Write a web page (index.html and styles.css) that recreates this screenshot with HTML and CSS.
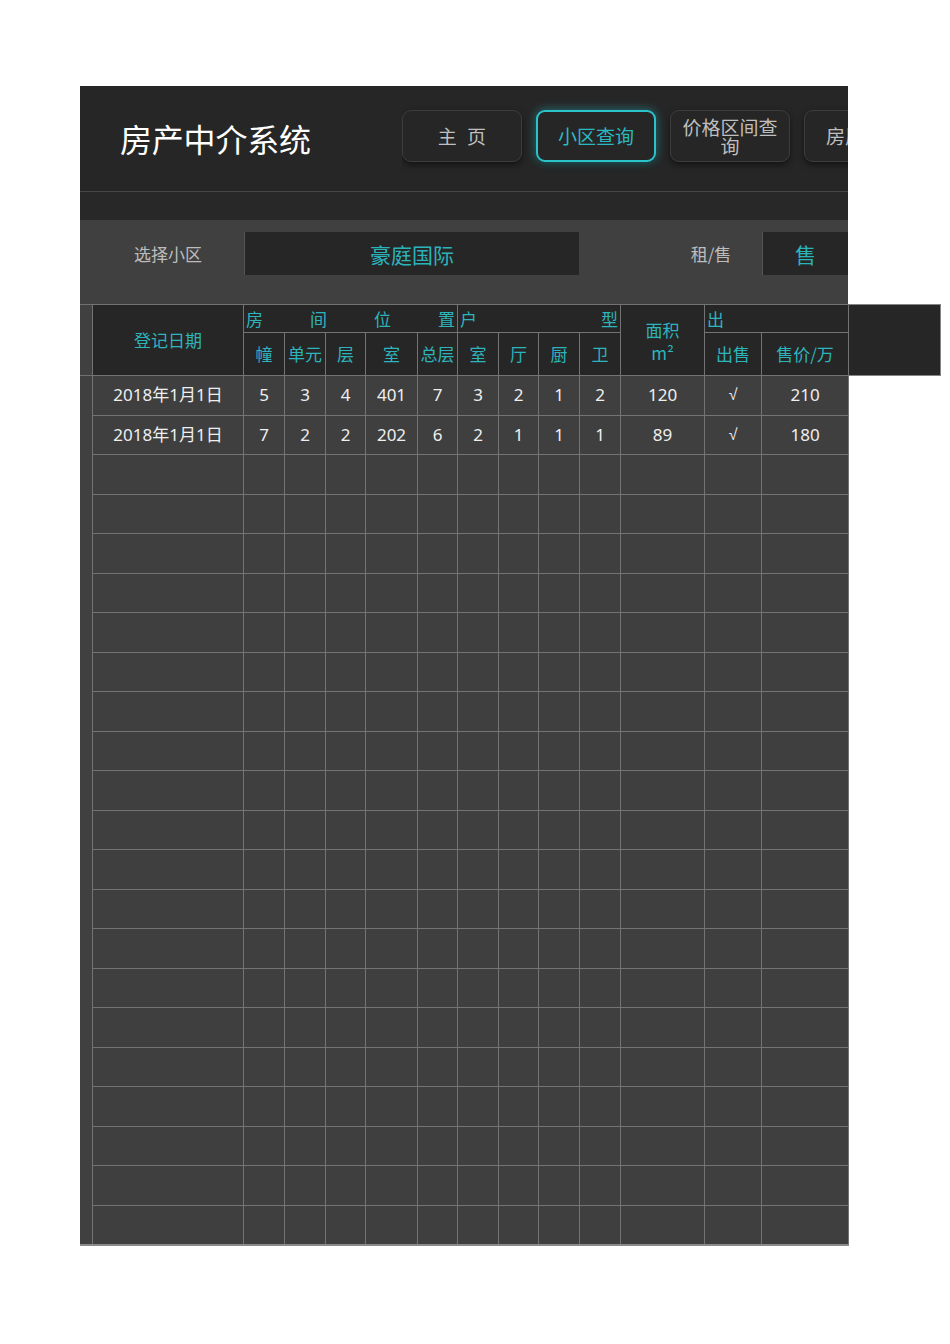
FILE: index.html
```html
<!DOCTYPE html>
<html lang="zh-CN">
<head>
<meta charset="utf-8">
<title>房产中介系统</title>
<link rel="stylesheet" href="styles.css">
</head>
<body>
<div class="page">
  <header class="topbar">
    <div class="title">房产中介系统</div>
    <nav class="nav">
      <div class="btn btn-home">主 页</div>
      <div class="btn active">小区查询</div>
      <div class="btn">价格区间查询</div>
      <div class="btn">房屋出租</div>
    </nav>
  </header>
  <div class="band"></div>
  <div class="filter">
    <div class="strip-cell"></div>
    <div class="label">选择小区</div>
    <div class="select">豪庭国际</div>
    <div class="spacer"></div>
    <div class="label">租/售</div>
    <div class="select">售</div>
  </div>
  <div class="grid-wrap">
    <div class="strip">
      <div class="strip-head"></div>
      <div class="strip-body"></div>
    </div>
    <table class="grid">
      <colgroup>
        <col style="width:151px"><col style="width:41px"><col style="width:41px"><col style="width:40px"><col style="width:52px"><col style="width:40px"><col style="width:41px"><col style="width:40px"><col style="width:41px"><col style="width:41px"><col style="width:84px"><col style="width:57px"><col style="width:87px">
      </colgroup>
      <thead>
        <tr class="h1">
          <th rowspan="2">登记日期</th>
          <th colspan="5"><div class="spread"><span>房</span><span>间</span><span>位</span><span>置</span></div></th>
          <th colspan="4"><div class="spread"><span>户</span><span>型</span></div></th>
          <th rowspan="2" class="area">面积<br>m²</th>
          <th colspan="2" class="left">出</th>
        </tr>
        <tr class="h2">
          <th>幢</th><th>单元</th><th>层</th><th>室</th><th>总层</th>
          <th>室</th><th>厅</th><th>厨</th><th>卫</th>
          <th>出售</th><th>售价/万</th>
        </tr>
      </thead>
      <tbody>
        <tr><td>2018年1月1日</td><td>5</td><td>3</td><td>4</td><td>401</td><td>7</td><td>3</td><td>2</td><td>1</td><td>2</td><td>120</td><td class="check">√</td><td>210</td></tr>
        <tr><td>2018年1月1日</td><td>7</td><td>2</td><td>2</td><td>202</td><td>6</td><td>2</td><td>1</td><td>1</td><td>1</td><td>89</td><td class="check">√</td><td>180</td></tr>
        <tr><td></td><td></td><td></td><td></td><td></td><td></td><td></td><td></td><td></td><td></td><td></td><td></td><td></td></tr>
        <tr><td></td><td></td><td></td><td></td><td></td><td></td><td></td><td></td><td></td><td></td><td></td><td></td><td></td></tr>
        <tr><td></td><td></td><td></td><td></td><td></td><td></td><td></td><td></td><td></td><td></td><td></td><td></td><td></td></tr>
        <tr><td></td><td></td><td></td><td></td><td></td><td></td><td></td><td></td><td></td><td></td><td></td><td></td><td></td></tr>
        <tr><td></td><td></td><td></td><td></td><td></td><td></td><td></td><td></td><td></td><td></td><td></td><td></td><td></td></tr>
        <tr><td></td><td></td><td></td><td></td><td></td><td></td><td></td><td></td><td></td><td></td><td></td><td></td><td></td></tr>
        <tr><td></td><td></td><td></td><td></td><td></td><td></td><td></td><td></td><td></td><td></td><td></td><td></td><td></td></tr>
        <tr><td></td><td></td><td></td><td></td><td></td><td></td><td></td><td></td><td></td><td></td><td></td><td></td><td></td></tr>
        <tr><td></td><td></td><td></td><td></td><td></td><td></td><td></td><td></td><td></td><td></td><td></td><td></td><td></td></tr>
        <tr><td></td><td></td><td></td><td></td><td></td><td></td><td></td><td></td><td></td><td></td><td></td><td></td><td></td></tr>
        <tr><td></td><td></td><td></td><td></td><td></td><td></td><td></td><td></td><td></td><td></td><td></td><td></td><td></td></tr>
        <tr><td></td><td></td><td></td><td></td><td></td><td></td><td></td><td></td><td></td><td></td><td></td><td></td><td></td></tr>
        <tr><td></td><td></td><td></td><td></td><td></td><td></td><td></td><td></td><td></td><td></td><td></td><td></td><td></td></tr>
        <tr><td></td><td></td><td></td><td></td><td></td><td></td><td></td><td></td><td></td><td></td><td></td><td></td><td></td></tr>
        <tr><td></td><td></td><td></td><td></td><td></td><td></td><td></td><td></td><td></td><td></td><td></td><td></td><td></td></tr>
        <tr><td></td><td></td><td></td><td></td><td></td><td></td><td></td><td></td><td></td><td></td><td></td><td></td><td></td></tr>
        <tr><td></td><td></td><td></td><td></td><td></td><td></td><td></td><td></td><td></td><td></td><td></td><td></td><td></td></tr>
        <tr><td></td><td></td><td></td><td></td><td></td><td></td><td></td><td></td><td></td><td></td><td></td><td></td><td></td></tr>
        <tr><td></td><td></td><td></td><td></td><td></td><td></td><td></td><td></td><td></td><td></td><td></td><td></td><td></td></tr>
        <tr><td></td><td></td><td></td><td></td><td></td><td></td><td></td><td></td><td></td><td></td><td></td><td></td><td></td></tr>
      </tbody>
    </table>
    <div class="overhang"></div>
  </div>
</div>
</body>
</html>
```

FILE: styles.css
```css
html, body {
  margin: 0;
  padding: 0;
  background: #ffffff;
}

body {
  font-family: "Noto Sans", "Noto Sans CJK SC", sans-serif;
}

.page {
  margin: 86px 0 0 80px;
  width: 768px;
}

/* ---------- top bar ---------- */
.topbar {
  height: 105px;
  background: #262626;
  border-bottom: 1px solid #464646;
  display: flex;
}

.title {
  flex: 0 0 322px;
  box-sizing: border-box;
  padding-left: 40px;
  display: flex;
  align-items: center;
  font-family: "Noto Sans CJK SC", sans-serif;
  font-size: 32px;
  color: #ffffff;
  letter-spacing: -0.2px;
  padding-bottom: 2px;
}

.nav {
  flex: 1;
  display: flex;
  align-items: center;
  gap: 14px;
  overflow: hidden;
  padding-bottom: 6px;
}

.btn {
  flex: 0 0 120px;
  height: 52px;
  box-sizing: border-box;
  border: 1px solid #3d3d3d;
  border-radius: 9px;
  display: flex;
  align-items: center;
  justify-content: center;
  text-align: center;
  padding: 0 10px;
  font-family: "Noto Sans CJK SC", sans-serif;
  font-size: 19px;
  line-height: 19px;
  color: #bfbfbf;
  background: #262626;
  box-shadow: 0 3px 6px rgba(0, 0, 0, 0.5);
}

.btn-home {
  word-spacing: 6px;
}

.btn.active {
  border: 2px solid #2bc3cb;
  color: #2bb9c1;
  box-shadow: 0 0 8px 1px rgba(43, 195, 203, 0.45), 0 3px 6px rgba(0, 0, 0, 0.4);
}

/* ---------- band ---------- */
.band {
  height: 28px;
  background: #282828;
}

/* ---------- filter ---------- */
.filter {
  height: 84px;
  box-sizing: border-box;
  padding-top: 12px;
  background: #404040;
  display: grid;
  grid-template-columns: 12px 152px 335px 81px 102px 86px;
  align-items: start;
}

.label {
  height: 43px;
  display: flex;
  align-items: center;
  justify-content: center;
  font-family: "Noto Sans CJK SC", sans-serif;
  font-size: 17px;
  color: #bdbdbd;
}

.select {
  height: 43px;
  display: flex;
  align-items: center;
  justify-content: center;
  background: #262626;
  border-left: 1px solid #555555;
  box-sizing: border-box;
  font-family: "Noto Sans CJK SC", sans-serif;
  font-size: 21px;
  color: #2bb3bb;
}

/* ---------- table ---------- */
.grid-wrap {
  position: relative;
  display: flex;
  background: #404040;
}

.strip {
  flex: 0 0 12px;
  display: flex;
  flex-direction: column;
}

.strip-head {
  height: 72px;
  box-sizing: border-box;
  border-top: 1px solid #707070;
  border-bottom: 1px solid #707070;
}

.strip-body {
  flex: 1;
  border-bottom: 2px solid #8a8a8a;
}

.grid {
  width: 756px;
  table-layout: fixed;
  border-collapse: collapse;
  position: relative;
  z-index: 1;
}

.grid th,
.grid td {
  border: 1px solid #737373;
  padding: 0;
  text-align: center;
  font-weight: normal;
  font-size: 17px;
  line-height: 20px;
  overflow: hidden;
  white-space: nowrap;
}

.grid th {
  background: #262626;
  color: #2db4bc;
  font-family: "Noto Sans CJK SC", sans-serif;
}

.grid td {
  background: #3f3f3f;
  color: #efefef;
}

.grid td.check {
  font-family: "Liberation Sans", sans-serif;
  font-size: 16px;
}

.grid tr.h1 {
  height: 28px;
}

.grid tr.h2 {
  height: 43px;
}

.grid tbody tr {
  height: 39.5px;
}

.grid tbody tr:last-child td {
  border-bottom: 2px solid #8a8a8a;
}

.grid th.area {
  white-space: normal;
  line-height: 23px;
  padding-top: 1px;
}

.grid th.left {
  text-align: left;
  padding-left: 2px;
}

.spread {
  display: flex;
  justify-content: space-between;
  padding: 0 2px;
}

.overhang {
  position: absolute;
  left: 100%;
  top: 0;
  width: 93px;
  height: 72px;
  box-sizing: border-box;
  background: #262626;
  border: 1px solid #858585;
  border-left: none;
}
```
